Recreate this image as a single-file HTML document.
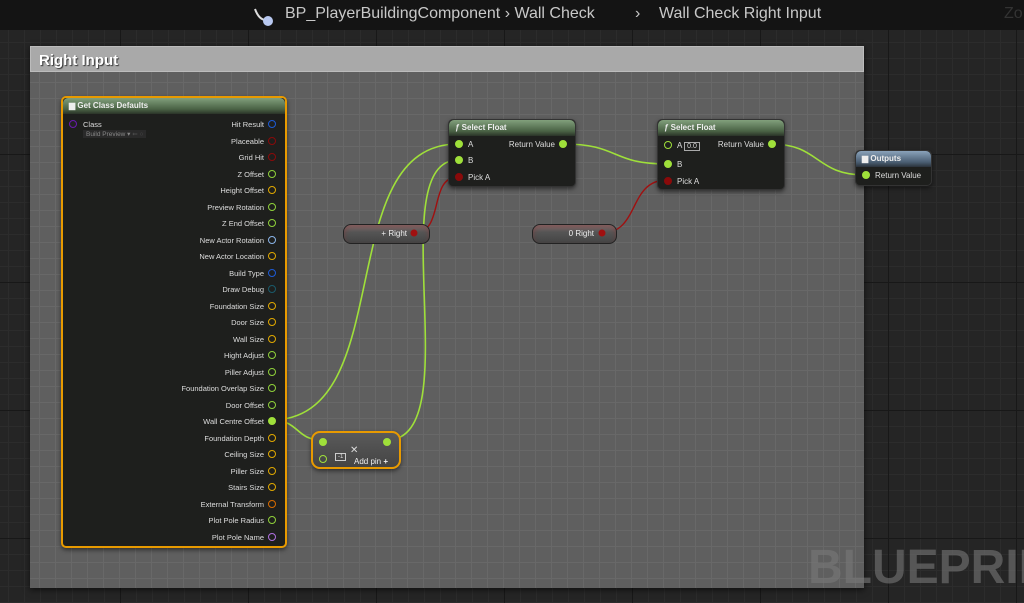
<!DOCTYPE html>
<html><head><meta charset="utf-8"><style>
*{margin:0;padding:0;box-sizing:border-box}
html,body{width:1024px;height:603px;overflow:hidden}
body{background:#252525;font-family:"Liberation Sans",sans-serif;position:relative}
.grid{position:absolute;inset:0;background-image:linear-gradient(#181818 1px,transparent 1px),linear-gradient(90deg,#181818 1px,transparent 1px),linear-gradient(#2c2c2c 1px,transparent 1px),linear-gradient(90deg,#2c2c2c 1px,transparent 1px);background-size:128px 128px,128px 128px,16px 16px,16px 16px;background-position:-8px 26px}
.top{position:absolute;left:0;top:0;width:1024px;height:30px;background:#141414}
.crumb{position:absolute;top:5px;color:#c8c8c8;font-size:16px;white-space:nowrap}
.cbox{position:absolute;left:30px;top:46px;width:834px;height:542px;background:#5f5f5f;box-shadow:0 2px 6px rgba(0,0,0,.6);background-image:linear-gradient(#686868 1px,transparent 1px),linear-gradient(90deg,#686868 1px,transparent 1px);background-size:16px 16px;background-position:9px 4px}
.chead{position:absolute;left:0;top:0;width:834px;height:26px;background:#a9a9a9;border:1px solid #bcbcbc;color:#fff;font-weight:bold;font-size:15px;padding:5px 8px;text-shadow:1px 1px 1px #333}
.node{position:absolute;background:#1e1f1d;border-radius:5px;box-shadow:0 2px 4px rgba(0,0,0,.5);color:#ddd;font-size:8px}
.nh{height:16px;border-radius:5px 5px 0 0;background:linear-gradient(#82a07c,#4a6245 70%,#2a3328);color:#eee;font-weight:bold;font-size:8px;padding:3px 6px}
.row{position:absolute;right:9px;height:10px;line-height:10px;white-space:nowrap;font-size:7.5px;color:#ddd}
.pin{display:inline-block;width:8px;height:8px;border-radius:50%;border:1.5px solid;vertical-align:-1px;margin-left:4px}
.var{position:absolute;height:20px;border-radius:8px;background:linear-gradient(#747474,#555 40%,#444);border:1px solid #222;box-shadow:inset 0 3px 5px rgba(160,40,40,.35);color:#eee;font-size:8px;text-align:right;padding:4px 22px 0 0}
</style></head><body>
<div class="grid"></div>
<div class="top"></div>
<svg style="position:absolute;left:252px;top:6px" width="24" height="22"><path d="M3 3 Q7 14 14 14" stroke="#ddd" stroke-width="2" fill="none"/><circle cx="16" cy="15" r="5" fill="#b8c8f0"/></svg>
<div class="crumb" style="left:285px">BP_PlayerBuildingComponent › Wall Check</div>
<div class="crumb" style="left:635px">›</div>
<div class="crumb" style="left:659px">Wall Check Right Input</div>
<div style="position:absolute;left:1004px;top:0;width:20px;height:30px;overflow:hidden"><div class="crumb" style="left:0;color:#333">Zo</div></div>
<div class="cbox"><div class="chead">Right Input</div></div>
<div style="position:absolute;left:808px;top:540px;width:216px;height:63px;overflow:hidden"><div style="position:absolute;left:0;top:0;font-size:48px;font-weight:bold;color:rgba(120,120,120,.6);white-space:nowrap">BLUEPRINT</div></div>

<svg style="position:absolute;left:0;top:0" width="1024" height="603">
<g fill="none" stroke-width="1.6" stroke="#9fe03a">
<path d="M271 420 C400 420 330 144 458 144"/>
<path d="M271 420 C300 420 295 440 322 440"/>
<path d="M387 440 C470 440 380 160 458 160"/>
<path d="M563 144 C620 144 610 164 667 164"/>
<path d="M771 144 C820 144 815 175 865 175"/>
</g>
<g fill="none" stroke-width="1.4" stroke="#a01010">
<path d="M414 233 C445 233 428 177 458 177"/>
<path d="M602 233 C640 233 628 180 667 180"/>
</g>
</svg>

<div class="node" style="left:61px;top:96px;width:226px;height:452px;border:2px solid #e89a00">
<div class="nh">▆ Get Class Defaults</div>
<div style="position:absolute;left:6px;top:22px;font-size:7.5px"><span class="pin" style="border-color:#6a1ab0;background:#222;margin:0 6px 0 0"></span>Class</div>
<div style="position:absolute;left:20px;top:32px;font-size:6.5px;color:#888;background:#2a2a2a;padding:0 3px">Build Preview ▾ <span style="color:#555">⇐ ○</span></div>
<div class="row" style="top:22px">Hit Result<span class="pin" style="border-color:#1d5bd6"></span></div>
<div class="row" style="top:39px">Placeable<span class="pin" style="border-color:#8a0a0a"></span></div>
<div class="row" style="top:55px">Grid Hit<span class="pin" style="border-color:#8a0a0a"></span></div>
<div class="row" style="top:72px">Z Offset<span class="pin" style="border-color:#8fd13a"></span></div>
<div class="row" style="top:88px">Height Offset<span class="pin" style="border-color:#e0a800"></span></div>
<div class="row" style="top:105px">Preview Rotation<span class="pin" style="border-color:#8fd13a"></span></div>
<div class="row" style="top:121px">Z End Offset<span class="pin" style="border-color:#8fd13a"></span></div>
<div class="row" style="top:138px">New Actor Rotation<span class="pin" style="border-color:#8ab4e8"></span></div>
<div class="row" style="top:154px">New Actor Location<span class="pin" style="border-color:#e0a800"></span></div>
<div class="row" style="top:171px">Build Type<span class="pin" style="border-color:#1d5bd6"></span></div>
<div class="row" style="top:187px">Draw Debug<span class="pin" style="border-color:#1a5a6a"></span></div>
<div class="row" style="top:204px">Foundation Size<span class="pin" style="border-color:#e0a800"></span></div>
<div class="row" style="top:220px">Door Size<span class="pin" style="border-color:#e0a800"></span></div>
<div class="row" style="top:237px">Wall Size<span class="pin" style="border-color:#e0a800"></span></div>
<div class="row" style="top:253px">Hight Adjust<span class="pin" style="border-color:#8fd13a"></span></div>
<div class="row" style="top:270px">Piller Adjust<span class="pin" style="border-color:#8fd13a"></span></div>
<div class="row" style="top:286px">Foundation Overlap Size<span class="pin" style="border-color:#8fd13a"></span></div>
<div class="row" style="top:303px">Door Offset<span class="pin" style="border-color:#8fd13a"></span></div>
<div class="row" style="top:319px">Wall Centre Offset<span class="pin" style="border-color:#9fe03a;background:#9fe03a"></span></div>
<div class="row" style="top:336px">Foundation Depth<span class="pin" style="border-color:#e0a800"></span></div>
<div class="row" style="top:352px">Ceiling Size<span class="pin" style="border-color:#e0a800"></span></div>
<div class="row" style="top:369px">Piller Size<span class="pin" style="border-color:#e0a800"></span></div>
<div class="row" style="top:385px">Stairs Size<span class="pin" style="border-color:#e0a800"></span></div>
<div class="row" style="top:402px">External Transform<span class="pin" style="border-color:#d96b00"></span></div>
<div class="row" style="top:418px">Plot Pole Radius<span class="pin" style="border-color:#8fd13a"></span></div>
<div class="row" style="top:435px">Plot Pole Name<span class="pin" style="border-color:#b070e0"></span></div>
</div>

<div class="node" style="left:448px;top:119px;width:128px;height:68px;border:1px solid #333">
<div class="nh"><i>ƒ</i> Select Float</div>
<div style="position:absolute;left:6px;top:20px"><span class="pin" style="border-color:#9fe03a;background:#9fe03a;margin:0 5px 0 0"></span>A</div>
<div style="position:absolute;left:6px;top:36px"><span class="pin" style="border-color:#9fe03a;background:#9fe03a;margin:0 5px 0 0"></span>B</div>
<div style="position:absolute;left:6px;top:53px"><span class="pin" style="border-color:#8a0a0a;background:#8a0a0a;margin:0 5px 0 0"></span>Pick A</div>
<div style="position:absolute;right:8px;top:20px">Return Value<span class="pin" style="border-color:#9fe03a;background:#9fe03a"></span></div>
</div>

<div class="node" style="left:657px;top:119px;width:128px;height:71px;border:1px solid #333">
<div class="nh"><i>ƒ</i> Select Float</div>
<div style="position:absolute;left:6px;top:21px"><span class="pin" style="border-color:#9fe03a;margin:0 5px 0 0"></span>A <span style="border:1px solid #aaa;padding:0 2px;font-size:7px">0.0</span></div>
<div style="position:absolute;left:6px;top:40px"><span class="pin" style="border-color:#9fe03a;background:#9fe03a;margin:0 5px 0 0"></span>B</div>
<div style="position:absolute;left:6px;top:57px"><span class="pin" style="border-color:#8a0a0a;background:#8a0a0a;margin:0 5px 0 0"></span>Pick A</div>
<div style="position:absolute;right:8px;top:20px">Return Value<span class="pin" style="border-color:#9fe03a;background:#9fe03a"></span></div>
</div>

<div class="node" style="left:855px;top:150px;width:77px;height:36px;border:1px solid #333">
<div class="nh" style="background:linear-gradient(#8aa2ba,#4a5e72 70%,#2a323a)">▆ Outputs</div>
<div style="position:absolute;left:6px;top:20px"><span class="pin" style="border-color:#9fe03a;background:#9fe03a;margin:0 5px 0 0"></span>Return Value</div>
</div>

<div class="var" style="left:343px;top:224px;width:87px">+ Right</div>
<div class="var" style="left:532px;top:224px;width:85px">0 Right</div>
<svg style="position:absolute;left:0;top:0" width="1024" height="603"><circle cx="414" cy="233" r="3.5" fill="#a01010"/><circle cx="602" cy="233" r="3.5" fill="#a01010"/></svg>

<div class="node" style="left:311px;top:431px;width:90px;height:38px;border:2px solid #e89a00;border-radius:9px;background:linear-gradient(#5a5a5a,#444)">
<span class="pin" style="position:absolute;left:6px;top:5px;border-color:#9fe03a;background:#9fe03a;margin:0"></span>
<span class="pin" style="position:absolute;left:70px;top:5px;border-color:#9fe03a;background:#9fe03a;margin:0"></span>
<span class="pin" style="position:absolute;left:6px;top:22px;border-color:#9fe03a;margin:0"></span>
<span style="position:absolute;left:22px;top:20px;border:1px solid #ccc;font-size:6px;padding:0 2px">-1</span>
<span style="position:absolute;left:37px;top:12px;font-size:10px">✕</span>
<span style="position:absolute;left:41px;top:24px;font-size:8px;color:#eee">Add pin <b>+</b></span>
</div>
</body></html>
